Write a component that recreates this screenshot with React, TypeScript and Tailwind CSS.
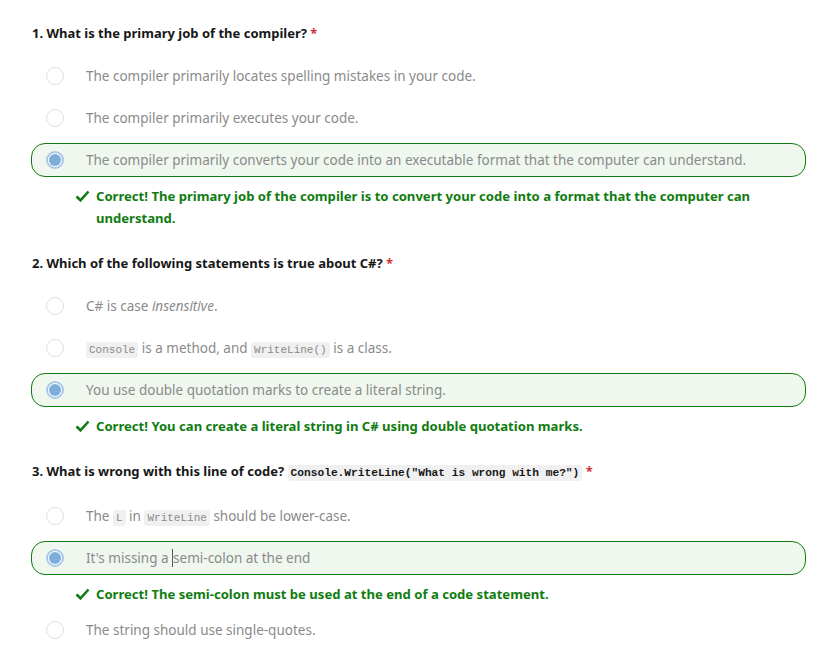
import type { ReactNode } from 'react'

const FONT = "font-['Noto_Sans','Open_Sans',sans-serif]"

function Code({ children, dark }: { children: ReactNode; dark?: boolean }): JSX.Element {
    return (
        <code
            className={`font-['Liberation_Mono',monospace] rounded-[3px] px-[3px] py-[2px] bg-[#f0f0f0] ${
                dark ? 'text-[11.2px] text-[#171717] font-bold' : 'text-[11px] text-[#8a8a8a]'
            }`}
        >
            {children}
        </code>
    )
}

function Radio({ checked }: { checked?: boolean }): JSX.Element {
    if (checked) {
        return (
            <span className="flex h-[18px] w-[18px] shrink-0 items-center justify-center rounded-full border-2 border-[#a8c8e6] bg-white">
                <span className="h-[12px] w-[12px] rounded-full bg-[#7daedb]" />
            </span>
        )
    }
    return <span className="h-[18px] w-[18px] shrink-0 rounded-full border border-[#e0e0e0] bg-white" />
}

function Option({ children, checked }: { children: ReactNode; checked?: boolean }): JSX.Element {
    return (
        <div
            className={`flex h-[34px] items-center rounded-[14px] border pl-[14px] mt-2 first:mt-0 ${
                checked ? 'border-[#107c10] bg-[#eff7ef]' : 'border-transparent'
            }`}
        >
            <Radio checked={checked} />
            <span className="ml-[22px] text-[13.5px] text-[#8a8a8a]">{children}</span>
        </div>
    )
}

function Feedback({ children }: { children: ReactNode }): JSX.Element {
    return (
        <div className="mt-2 flex pl-[44px] pr-[40px] text-[13.1px] font-bold leading-[22px] text-[#107c10]">
            <svg className="mt-[5px] h-[12px] w-[15px] shrink-0" viewBox="0 0 15 12" fill="none">
                <path d="M1.5 6.5 L5.5 10.3 L13.5 1.5" stroke="#107c10" strokeWidth="2.6" />
            </svg>
            <span className="ml-[6px]">{children}</span>
        </div>
    )
}

function Question({ title }: { title: ReactNode }): JSX.Element {
    return (
        <div className="mb-4 pl-px text-[13px] font-bold leading-5 text-[#171717]">
            {title} <span className="text-[#d13438]">*</span>
        </div>
    )
}

export default function App(): JSX.Element {
    return (
        <div className={`${FONT} min-h-[672px] bg-white pl-[31px] pr-[28px] pt-[23px]`}>
            <Question title="1. What is the primary job of the compiler?" />
            <Option>The compiler primarily locates spelling mistakes in your code.</Option>
            <Option>The compiler primarily executes your code.</Option>
            <Option checked>
                The compiler primarily converts your code into an executable format that the computer can understand.
            </Option>
            <Feedback>
                Correct! The primary job of the compiler is to convert your code into a format that the computer can
                understand.
            </Feedback>

            <div className="mt-6">
                <Question title="2. Which of the following statements is true about C#?" />
                <Option>
                    C# is case <em>insensitive</em>.
                </Option>
                <Option>
                    <Code>Console</Code> is a method, and <Code>WriteLine()</Code> is a class.
                </Option>
                <Option checked>You use double quotation marks to create a literal string.</Option>
                <Feedback>Correct! You can create a literal string in C# using double quotation marks.</Feedback>
            </div>

            <div className="mt-6">
                <Question
                    title={
                        <>
                            3. What is wrong with this line of code?{' '}
                            <Code dark>Console.WriteLine("What is wrong with me?")</Code>
                        </>
                    }
                />
                <Option>
                    The <Code>L</Code> in <Code>WriteLine</Code> should be lower-case.
                </Option>
                <Option checked>
                    It's missing a <span className="border-l border-[#555]" />
                    semi-colon at the end
                </Option>
                <Feedback>Correct! The semi-colon must be used at the end of a code statement.</Feedback>
                <div className="mt-[2px]" />
                <Option>The string should use single-quotes.</Option>
            </div>
        </div>
    )
}
